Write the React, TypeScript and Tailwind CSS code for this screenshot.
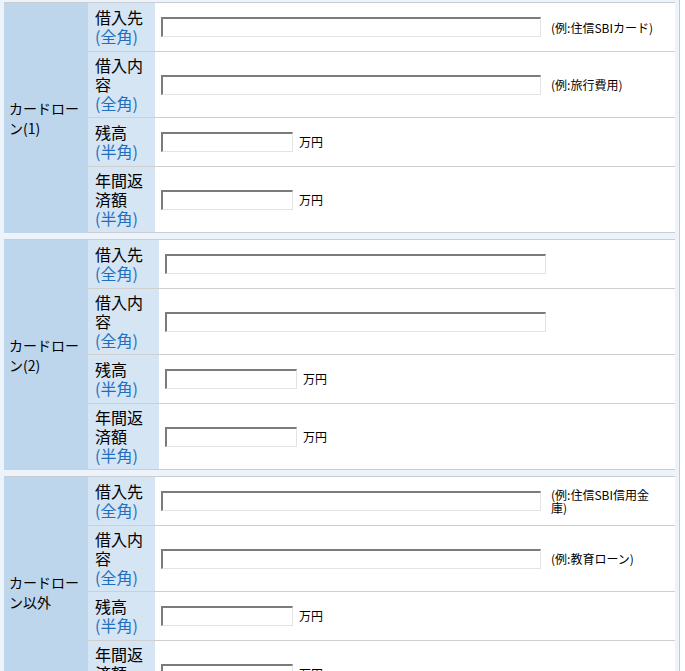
const font = { fontFamily: '"Noto Sans CJK JP", "Liberation Sans", sans-serif' }

type Row = {
  label: string
  kind: "全角" | "半角"
  short?: boolean
  hint?: string
  h: string
}

type Section = {
  title: string
  subWidth: string
  inputWidth: string
  rows: Row[]
}

const sections: Section[] = [
  {
    title: "カードローン(1)",
    subWidth: "w-[67px]",
    inputWidth: "w-[380px]",
    rows: [
      { label: "借入先", kind: "全角", hint: "(例:住信SBIカード)", h: "h-[49px]" },
      { label: "借入内容", kind: "全角", hint: "(例:旅行費用)", h: "h-[66px]" },
      { label: "残高", kind: "半角", short: true, h: "h-[49px]" },
      { label: "年間返済額", kind: "半角", short: true, h: "h-[66px]" },
    ],
  },
  {
    title: "カードローン(2)",
    subWidth: "w-[71px]",
    inputWidth: "w-[381px]",
    rows: [
      { label: "借入先", kind: "全角", h: "h-[49px]" },
      { label: "借入内容", kind: "全角", h: "h-[66px]" },
      { label: "残高", kind: "半角", short: true, h: "h-[49px]" },
      { label: "年間返済額", kind: "半角", short: true, h: "h-[66px]" },
    ],
  },
  {
    title: "カードローン以外",
    subWidth: "w-[67px]",
    inputWidth: "w-[380px]",
    rows: [
      { label: "借入先", kind: "全角", hint: "(例:住信SBI信用金庫)", h: "h-[49px]" },
      { label: "借入内容", kind: "全角", hint: "(例:教育ローン)", h: "h-[66px]" },
      { label: "残高", kind: "半角", short: true, h: "h-[49px]" },
      { label: "年間返済額", kind: "半角", short: true, h: "h-[66px]" },
    ],
  },
]

function TextBox({ width }: { width: string }) {
  return (
    <input
      type="text"
      className={`${width} h-[20px] border-t-2 border-l-2 border-r border-b border-t-[#7b7b7b] border-l-[#7b7b7b] border-r-[#e3e3e3] border-b-[#e3e3e3] bg-white outline-none`}
    />
  )
}

function FieldRow({ row, sub, inputWidth, last }: { row: Row; sub: string; inputWidth: string; last: boolean }) {
  return (
    <div className={`flex ${row.h} border-b ${last ? "border-[#c9cdd2]" : "border-[#cfcfcf]"}`}>
      <div className={`${sub} shrink-0 bg-[#d5e5f4] pl-[7px] pr-[4px] flex flex-col justify-center text-[16px] leading-[19px] text-black`}>
        <span>{row.label}</span>
        <span className="text-[#1f6fbf]">({row.kind})</span>
      </div>
      <div className="flex-1 bg-white pl-[6px] flex items-center">
        {row.short ? (
          <>
            <TextBox width="w-[132px]" />
            <span className="ml-[6px] text-[12px] text-black">万円</span>
          </>
        ) : (
          <>
            <TextBox width={inputWidth} />
            {row.hint && (
              <span className="ml-[10px] w-[112px] text-[12px] leading-[13px] text-black">{row.hint}</span>
            )}
          </>
        )}
      </div>
    </div>
  )
}

export default function App() {
  return (
    <div className="min-h-screen bg-white" style={font}>
      <div className="w-[680px] bg-[#edf3fa] pl-[4px] pr-[4px] pt-[2px] border-r border-[#c4c9cf] flex flex-col gap-[6px]">
        {sections.map((s) => (
          <div key={s.title} className="flex border-t border-[#c9cdd2]">
            <div className="w-[84px] shrink-0 bg-[#bdd6ec] pl-[5px] pr-[2px] flex items-center text-[14px] leading-[20px] text-black">
              <span>{s.title}</span>
            </div>
            <div className="flex-1 flex flex-col">
              {s.rows.map((r, i) => (
                <FieldRow key={r.label} row={r} sub={s.subWidth} inputWidth={s.inputWidth} last={i === s.rows.length - 1} />
              ))}
            </div>
          </div>
        ))}
      </div>
    </div>
  )
}
